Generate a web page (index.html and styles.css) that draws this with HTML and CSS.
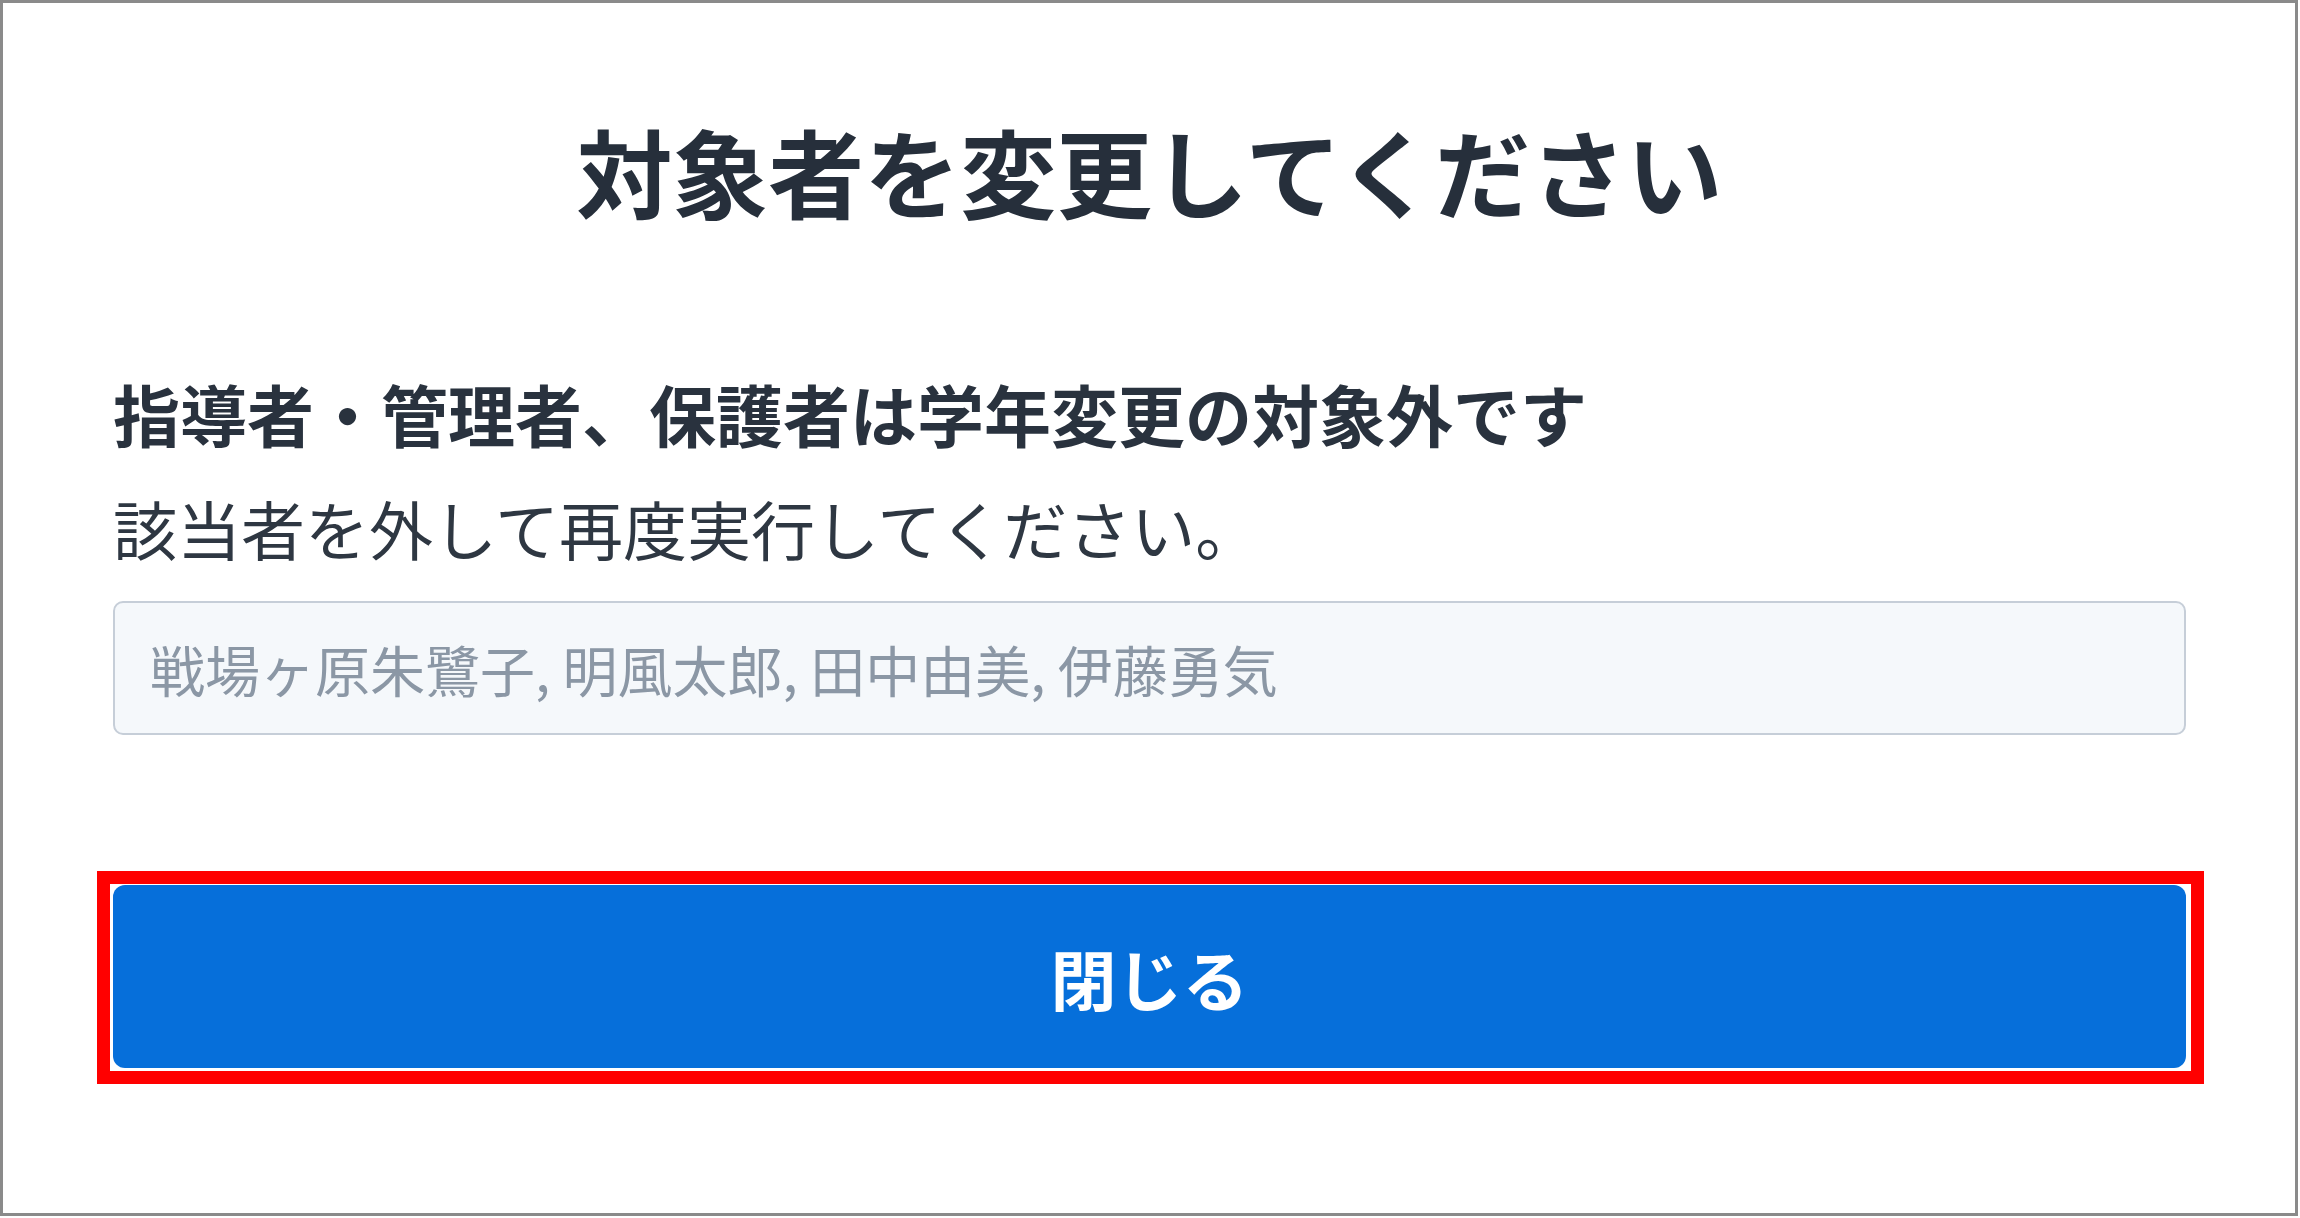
FILE: index.html
```html
<!DOCTYPE html>
<html lang="ja">
<head>
<meta charset="utf-8">
<title>対象者を変更してください</title>
<link rel="stylesheet" href="styles.css">
</head>
<body>
<div class="frame">
  <h1 class="title">対象者を変更してください</h1>
  <p class="lead">指導者・管理者、保護者は学年変更の対象外です</p>
  <p class="note">該当者を外して再度実行してください。</p>
  <div class="field"><span class="placeholder">戦場ヶ原朱鷺子, 明風太郎, 田中由美, 伊藤勇気</span></div>
  <div class="highlight">
    <button class="btn" type="button">閉じる</button>
  </div>
</div>
</body>
</html>
```

FILE: styles.css
```css
* { box-sizing: border-box; }
html, body { margin: 0; padding: 0; background: #ffffff; }
body {
  width: 2300px;
  height: 1218px;
  font-family: "Noto Sans CJK JP", "Noto Sans", sans-serif;
  color: #29323e;
}
.frame {
  width: 2298px;
  height: 1216px;
  border: 3px solid #8a8a8a;
  padding: 119px 109px 0 110px;
  display: flex;
  flex-direction: column;
}
.title {
  margin: 0;
  font-size: 96px;
  line-height: 96px;
  font-weight: 700;
  text-align: center;
  color: #262f3b;
}
.lead {
  margin: 161px 0 0;
  font-size: 67px;
  line-height: 67px;
  font-weight: 700;
  color: #29323e;
}
.note {
  margin: 48px 0 0;
  font-size: 64px;
  line-height: 66px;
  font-weight: 400;
  color: #2e3742;
}
.field {
  margin-top: 41px;
  height: 134px;
  border: 2px solid #c6ced8;
  border-radius: 10px;
  background: #f5f8fb;
  display: flex;
  align-items: center;
  padding: 0 0 0 35px;
}
.placeholder {
  font-size: 55px;
  line-height: 1;
  color: #8b97a5;
}
.highlight {
  margin: 136px -18px 0 -16px;
  border: 13px solid #ff0000;
  padding: 1px 5px 3px 3px;
}
.btn {
  display: block;
  width: 100%;
  height: 183px;
  border: none;
  border-radius: 12px;
  background: #066fda;
  color: #ffffff;
  font-family: "Noto Sans CJK JP", "Noto Sans", sans-serif;
  font-size: 66px;
  font-weight: 700;
  line-height: 1;
  padding: 0;
}
```
